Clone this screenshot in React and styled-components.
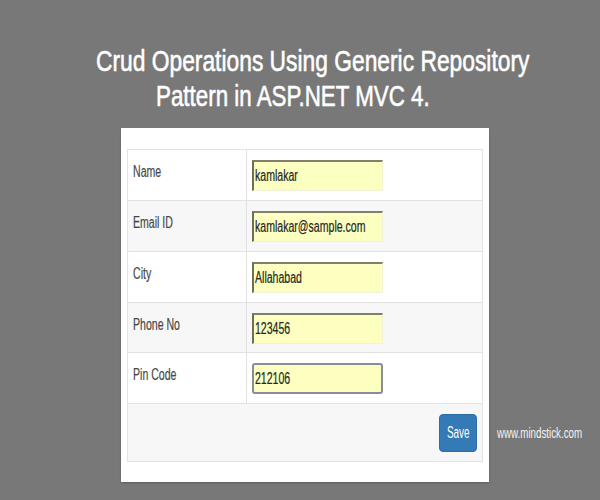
import React from "react";
import styled, { createGlobalStyle } from "styled-components";

const Global = createGlobalStyle`
  html, body { margin: 0; padding: 0; background: #787878; }
  body { width: 600px; height: 500px; overflow: hidden; font-family: "Liberation Sans", Arial, sans-serif; }
`;

const Page = styled.div`
  width: 600px;
  height: 500px;
  overflow: hidden;
  background: #787878;
  padding-top: 43px;
  box-sizing: border-box;
`;

const Squeeze = styled.span`
  display: inline-block;
  white-space: nowrap;
  transform: scaleX(${(p) => p.$s || 0.66});
  transform-origin: ${(p) => (p.$center ? "center" : "left")} center;
`;

const Title = styled.h1`
  margin: 0;
  font-family: "Liberation Sans", Arial, sans-serif;
  font-weight: normal;
  font-size: 30px;
  line-height: 35px;
  color: #ffffff;
  -webkit-text-stroke: 0.6px #ffffff;
`;

const TitleLine = styled.div`
  padding-left: ${(p) => p.$indent}px;
  white-space: nowrap;
`;

const Main = styled.div`
  display: flex;
  align-items: flex-start;
  margin-top: 15px;
`;

const Panel = styled.div`
  flex-shrink: 0;
  margin-left: 121px;
  width: 368px;
  background: #ffffff;
  padding: 21px 6px 20px 6px;
  box-sizing: border-box;
  box-shadow: 0 1px 2px rgba(0,0,0,0.25);
`;

const Table = styled.table`
  width: 100%;
  table-layout: fixed;
  border-collapse: collapse;
  border: 1px solid #e2e2e2;
`;

const Row = styled.tr`
  background: ${(p) => (p.$striped ? "#f7f7f7" : "#ffffff")};
  height: ${(p) => p.$h}px;
`;

const LabelCell = styled.td`
  width: 119px;
  border: 1px solid #e2e2e2;
  border-right: ${(p) => (p.$open ? "none" : "1px solid #e2e2e2")};
  vertical-align: top;
  padding: 11px 5px 0 5px;
  font-size: 16px;
  line-height: 22px;
  color: #474747;
  box-sizing: border-box;
  -webkit-text-stroke: 0.2px #474747;
`;

const FieldCell = styled.td`
  border: 1px solid #e2e2e2;
  border-left: ${(p) => (p.$open ? "none" : "1px solid #e2e2e2")};
  vertical-align: top;
  padding: 10px 5px 0 5px;
  text-align: ${(p) => (p.$right ? "right" : "left")};
`;

const Field = styled.div`
  width: 131px;
  height: 31px;
  box-sizing: border-box;
  padding: 0 0 0 1px;
  background: #fcffbf;
  font-size: 16px;
  line-height: ${(p) => (p.$focus ? "27px" : "28px")};
  color: #262626;
  -webkit-text-stroke: 0.2px #262626;
  border-style: solid;
  border-width: ${(p) => (p.$focus ? "2px" : "2px 1px 1px 2px")};
  border-color: ${(p) => (p.$focus ? "#8c8c96" : "#7f7f6a #f2f2d8 #f2f2d8 #6e6e5c")};
  border-radius: ${(p) => (p.$focus ? "3px" : "0")};
  overflow: hidden;
`;

const SaveButton = styled.button`
  width: 38px;
  height: 38px;
  margin-right: 0;
  background: #337ab7;
  color: #fff;
  border: 1px solid #2e6da4;
  border-radius: 4px;
  font-family: "Liberation Sans", Arial, sans-serif;
  font-size: 16px;
  padding: 0;
`;

const Site = styled.div`
  margin-left: 8px;
  margin-top: 296px;
  width: 90px;
  color: #f4f4f4;
  font-size: 15px;
`;

const fields = [
  { label: "Name", value: "kamlakar", h: 51 },
  { label: "Email ID", value: "kamlakar@sample.com", h: 51 },
  { label: "City", value: "Allahabad", h: 51 },
  { label: "Phone No", value: "123456", h: 50 },
  { label: "Pin Code", value: "212106", h: 51, focus: true },
];

export default function App() {
  return (
    <Page>
      <Global />
      <Title>
        <TitleLine $indent={96}>
          <Squeeze $s={0.76}>Crud Operations Using Generic Repository</Squeeze>
        </TitleLine>
        <TitleLine $indent={156}>
          <Squeeze $s={0.745}>Pattern in ASP.NET MVC 4.</Squeeze>
        </TitleLine>
      </Title>
      <Main>
        <Panel>
          <Table>
            <tbody>
              {fields.map((f, i) => (
                <Row key={f.label} $striped={i % 2 === 1} $h={f.h}>
                  <LabelCell>
                    <Squeeze>{f.label}</Squeeze>
                  </LabelCell>
                  <FieldCell>
                    <Field $focus={f.focus}>
                      <Squeeze>{f.value}</Squeeze>
                    </Field>
                  </FieldCell>
                </Row>
              ))}
              <Row $striped $h={58}>
                <LabelCell $open />
                <FieldCell $right $open>
                  <SaveButton>
                    <Squeeze $s={0.62} $center>Save</Squeeze>
                  </SaveButton>
                </FieldCell>
              </Row>
            </tbody>
          </Table>
        </Panel>
        <Site>
          <Squeeze $s={0.65}>www.mindstick.com</Squeeze>
        </Site>
      </Main>
    </Page>
  );
}
